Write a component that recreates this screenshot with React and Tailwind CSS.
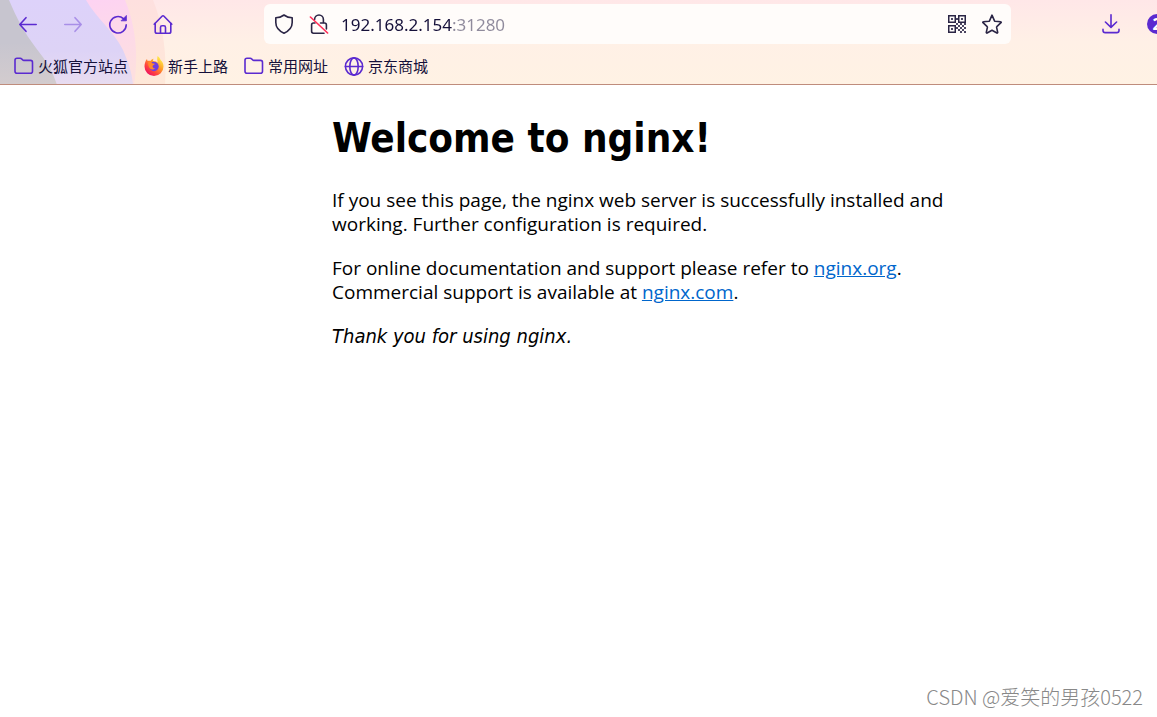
const iconProps = {
  width: 20,
  height: 20,
  viewBox: "0 0 20 20",
  fill: "none",
  stroke: "currentColor",
  strokeWidth: 1.6,
  strokeLinecap: "round",
  strokeLinejoin: "round",
  "aria-hidden": true,
  className: "shrink-0",
};

const BackIcon = () => (
  <svg {...iconProps}>
    <path d="M18.2 10.500H1.8M8 3.700L1.8 10.500l6.200 6.800" />
  </svg>
);

const ForwardIcon = () => (
  <svg {...iconProps}>
    <path d="M1.8 10.500h16.400M12 3.700l6.200 6.800-6.200 6.800" />
  </svg>
);

const ReloadIcon = () => (
  <svg {...iconProps}>
    <path d="M18.2 10.900a8.200 8.200 0 1 1-2.800-6.300" />
    <path d="M18.400 1.800v5h-5z" fill="currentColor" strokeWidth="0.8" />
  </svg>
);

const HomeIcon = () => (
  <svg {...iconProps}>
    <path d="M1.200 10.200L9 2.200a1.400 1.400 0 0 1 2 0l7.800 8" />
    <path d="M2.200 9.400v8c0 1 .7 1.800 1.700 1.800h12.200c1 0 1.700-.8 1.700-1.800v-8" />
    <path d="M7.500 18.800v-5.400c0-.9.600-1.600 1.600-1.600h1.800c1 0 1.600.7 1.600 1.600v5.400" />
  </svg>
);

const ShieldIcon = () => (
  <svg {...iconProps}>
    <path d="M10 1c2.300 1.800 5 2.700 8.200 2.800v4.700c0 4.700-3 8.300-8.200 10.700C4.800 16.800 1.800 13.200 1.800 8.500V3.800C5 3.700 7.700 2.800 10 1z" />
  </svg>
);

const InsecureIcon = () => (
  <svg {...iconProps}>
    <path d="M5.600 5.400a4.400 4.400 0 0 1 8.800 0V8.400" />
    <path d="M11.500 9h4c1.100 0 1.900.8 1.900 1.900v4M15 19.200H4.500c-1.100 0-1.900-.8-1.900-1.900v-6.400c0-1.100.8-1.900 1.900-1.900h1.500" />
    <path d="M1.400 3l17.200 16" stroke="#ff2e58" />
  </svg>
);

const QrIcon = () => (
  <svg width="18" height="18" viewBox="0 0 18 18" fill="currentColor" aria-hidden="true">
    <path
      fillRule="evenodd"
      d="M0 0h8v8H0zM1.500 1.500v5h5v-5zM10 0h8v8h-8zM11.500 1.500v5h5v-5zM0 10h8v8H0zM1.500 11.500v5h5v-5z"
    />
    <path
      opacity="0.85"
      d="M3 3h2v2H3zM13 3h2v2h-2zM3 13h2v2H3zM8 3h2v2H8zM8 8h2v2H8zM12 8h2v2h-2zM16 8h2v2h-2zM10 10h2v2h-2zM14 10h2v2h-2zM8 12h2v2H8zM12 12h2v2h-2zM16 12h2v2h-2zM10 14h2v2h-2zM14 14h2v2h-2zM12 16h2v2h-2zM16 16h2v2h-2z"
    />
  </svg>
);

const StarIcon = () => (
  <svg {...iconProps}>
    <path d="M10 1.200l2.500 5.600c.1.200.3.300.5.400l5.700.6c.5 0 .7.600.3.900l-4.200 4c-.2.100-.2.400-.2.600l1.100 5.100c.1.500-.4.800-.8.600L10 16.300 5.100 19c-.4.200-.9-.1-.8-.6l1.100-5.100c0-.2 0-.5-.2-.6L1 8.700c-.4-.3-.2-.9.300-.9l5.700-.6c.2-.1.400-.2.500-.4z" />
  </svg>
);

const DownloadIcon = () => (
  <svg {...iconProps}>
    <path d="M10 .8v12.400M4.400 8l5.600 5.400L15.600 8" />
    <path d="M2 15.400v1c0 1.400.9 2.200 2.200 2.200h11.600c1.300 0 2.200-.8 2.200-2.200v-1" />
  </svg>
);

const FolderIcon = () => (
  <svg {...iconProps}>
    <path d="M1 4.300c0-1.100.9-2 2-2h3.300c.5 0 1 .2 1.300.6l.9.900c.4.400.8.600 1.300.600H16.500c1.100 0 2 .9 2 2v8.800c0 1.100-.9 2-2 2H3c-1.100 0-2-.9-2-2z" />
  </svg>
);

const GlobeIcon = () => (
  <svg {...iconProps}>
    <circle cx="10" cy="10.500" r="8.600" />
    <ellipse cx="10" cy="10.500" rx="4.200" ry="8.600" />
    <path d="M1.400 10.500h17.200" />
  </svg>
);

const FirefoxIcon = () => (
  <svg width="20" height="20" viewBox="0 0 20 20" className="shrink-0" aria-hidden="true">
    <defs>
      <linearGradient id="fox" x1="0.85" y1="0.1" x2="0.2" y2="0.9">
        <stop offset="0" stopColor="#fff04a" />
        <stop offset="0.4" stopColor="#ff9a28" />
        <stop offset="0.75" stopColor="#ff4040" />
        <stop offset="1" stopColor="#ee1560" />
      </linearGradient>
    </defs>
    <path
      fill="url(#fox)"
      d="M13.600 0c1.900 1.300 2.600 2.700 2.900 4 1.900 1.500 3 3.900 3 6.500A9.500 9.500 0 0 1 .5 10.500C.5 7.700 1.300 5 3 3c.1.900.3 1.400.7 1.900.8-.3 1.900-.4 2.800 0C7.200 3.800 8.300 3 9.600 2.800c-.6.900-.7 1.600-.4 2.300 1.300.3 3 .2 4.600 1.400C13 4 13.200 1.800 13.600 0z"
    />
    <circle cx="10" cy="10.500" r="4.700" fill="#6f3fe0" />
    <path fill="#ff8a2a" d="M4.200 6.300c1.800-.6 3.200.1 3.900 1l2.700.5c-.3 1.200-1.700 1.300-2.200 2.100-.3 1.300.8 2.600 2.500 2.300-1.300 1.600-3.800 1.600-5.200.2C4.700 11 4 8.600 4.200 6.300z" />
  </svg>
);

const navButtons = [
  { label: "后退", icon: BackIcon },
  { label: "前进", icon: ForwardIcon, disabled: true },
  { label: "刷新", icon: ReloadIcon },
  { label: "主页", icon: HomeIcon },
];

const bookmarks = [
  { name: "火狐官方站点", icon: FolderIcon },
  { name: "新手上路", icon: FirefoxIcon },
  { name: "常用网址", icon: FolderIcon },
  { name: "京东商城", icon: GlobeIcon },
];

// Coloured waves of the browser theme
const ThemeArt = () => (
  <svg className="absolute left-0 top-0" width="180" height="85" viewBox="0 0 180 85" aria-hidden="true">
    <defs>
      <linearGradient id="gray" x1="0" y1="0" x2="0" y2="1">
        <stop offset="0.5" stopColor="#c7c5cf" />
        <stop offset="1" stopColor="#d3ccce" />
      </linearGradient>
      <linearGradient id="lavender" x1="0" y1="0" x2="0" y2="1">
        <stop offset="0" stopColor="#ddd2fa" />
        <stop offset="0.6" stopColor="#ddd3f6" />
        <stop offset="1" stopColor="#e8dcf0" />
      </linearGradient>
      <linearGradient id="pink" x1="0" y1="0" x2="0.3" y2="1">
        <stop offset="0" stopColor="#fdd0f6" />
        <stop offset="1" stopColor="#fddfe0" />
      </linearGradient>
      <linearGradient id="peach" x1="0" y1="0" x2="0" y2="1">
        <stop offset="0" stopColor="#fee0df" />
        <stop offset="1" stopColor="#fee8d8" />
      </linearGradient>
    </defs>
    <path fill="url(#peach)" d="M0 0h153c10 24 14 54 12 85H0z" />
    <path fill="url(#pink)" d="M0 0h125c10 24 14 54 9 85H0z" />
    <path fill="url(#lavender)" d="M0 0h86c10 18 27 30 37 50 5 12 9 22 10 35H0z" />
    <path fill="url(#gray)" d="M0 0h9c8 19 15 32 27 48 11 14 17 24 21 37H0z" />
  </svg>
);

export default function App() {
  return (
    <div className="flex min-h-screen flex-col bg-white">
      <header className="relative overflow-hidden border-b border-[#bf8c7c] bg-linear-to-b from-[#ffe7e8] via-[#fff0e6] to-[#fff2e4] font-['Noto_Sans','Noto_Sans_CJK_SC',sans-serif] text-[#5b2ad0]">
        <ThemeArt />
        <div className="relative flex h-12 items-center">
          <nav className="flex w-[264px] shrink-0 items-center gap-[25px] pl-[18px]">
            {navButtons.map(({ label, icon: Icon, disabled }) => (
              <button key={label} type="button" aria-label={label} disabled={disabled} className="disabled:opacity-40">
                <Icon />
              </button>
            ))}
          </nav>

          {/* Address bar */}
          <div className="flex h-10 min-w-0 flex-1 items-center rounded-md bg-[#fffcfa] pr-[9px] pl-[10px] text-[#2b2545]">
            <button type="button" aria-label="跟踪保护">
              <ShieldIcon />
            </button>
            <button type="button" aria-label="连接不安全" className="ml-[15px]">
              <InsecureIcon />
            </button>
            {/* the port is dimmer than the host */}
            <input
              type="text"
              aria-label="地址"
              defaultValue="192.168.2.154:31280"
              className="ml-3 min-w-0 flex-1 bg-linear-to-r from-[#15103a] from-[111px] to-[#8f8a9c] to-[111px] bg-clip-text pt-px text-[17px] leading-6 text-transparent outline-none"
            />
            <button type="button" aria-label="二维码">
              <QrIcon />
            </button>
            <button type="button" aria-label="添加书签" className="ml-4">
              <StarIcon />
            </button>
          </div>

          <div className="flex w-[146px] shrink-0 items-center justify-end gap-[26px]">
            <button type="button" aria-label="下载">
              <DownloadIcon />
            </button>
            <button
              type="button"
              aria-label="账户"
              className="-mr-[10px] size-5 shrink-0 rounded-full bg-[#5b2ad0] text-base leading-5 font-bold text-white"
            >
              2
            </button>
          </div>
        </div>

        <ul className="relative flex h-9 items-center gap-4 pl-[14px] text-[15px] leading-5 text-[#15103a]">
          {bookmarks.map(({ name, icon: Icon }) => (
            <li key={name}>
              <a href="#" className="flex items-center gap-1 whitespace-nowrap">
                <span className="text-[#5b2ad0]">
                  <Icon />
                </span>
                {name}
              </a>
            </li>
          ))}
        </ul>
      </header>

      <main className="flex-1 pt-[29px] pl-[332px] font-['Open_Sans',sans-serif] text-[19px] leading-6 text-black">
        <div className="max-w-[700px] space-y-5">
          <h1 className="mb-[26px] font-['DejaVu_Sans_Condensed',sans-serif] text-[40px] leading-[48px] font-bold">
            Welcome to nginx!
          </h1>
          <p>
            If you see this page, the nginx web server is successfully installed and
            <br />
            working. Further configuration is required.
          </p>
          <p>
            For online documentation and support please refer to{" "}
            <a href="#" className="text-[#0066cc] underline">nginx.org</a>.
            <br />
            Commercial support is available at{" "}
            <a href="#" className="text-[#0066cc] underline">nginx.com</a>.
          </p>
          <p className="font-['DejaVu_Sans_Condensed',sans-serif] text-[20px]">
            <em>Thank you for using nginx.</em>
          </p>
        </div>
      </main>

      <footer className="pr-[14px] pb-2 text-right font-['Noto_Sans_CJK_SC',sans-serif] text-[20px] leading-6 font-light text-[#888]">
        CSDN @爱笑的男孩0522
      </footer>
    </div>
  );
}
